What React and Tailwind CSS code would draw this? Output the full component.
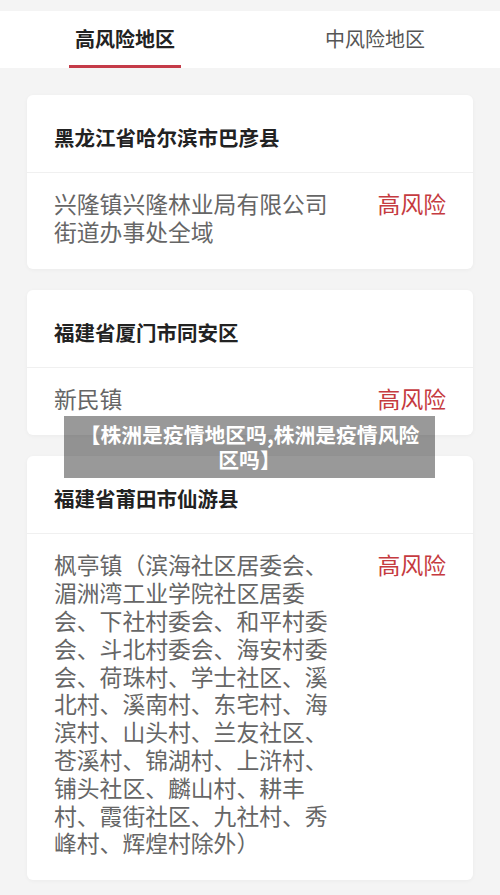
import React from "react";

const areas = [
  {
    title: "黑龙江省哈尔滨市巴彦县",
    place: "兴隆镇兴隆林业局有限公司街道办事处全域",
  },
  {
    title: "福建省厦门市同安区",
    place: "新民镇",
  },
  {
    title: "福建省莆田市仙游县",
    place:
      "枫亭镇（滨海社区居委会、湄洲湾工业学院社区居委会、下社村委会、和平村委会、斗北村委会、海安村委会、荷珠村、学士社区、溪北村、溪南村、东宅村、海滨村、山头村、兰友社区、苍溪村、锦湖村、上浒村、铺头社区、麟山村、耕丰村、霞街社区、九社村、秀峰村、辉煌村除外）",
  },
];

const AreaCard = ({ title, place }) => (
  <div className="bg-white rounded-[6px] shadow-[0_1px_4px_rgba(0,0,0,0.04)]">
    <div className="px-[27px] pt-[31px] pb-[24px] border-b border-[#f0f0f0]">
      <h3 className="text-[20.5px] leading-[22px] font-semibold text-[#222]">{title}</h3>
    </div>
    <div className="flex justify-between items-start px-[27px] pt-[17px] pb-[23px]">
      <p className="w-[285px] text-[22.8px] leading-[27.8px] text-[#666]">{place}</p>
      <span className="text-[22.8px] leading-[27.8px] text-[#c53b40]">高风险</span>
    </div>
  </div>
);

export default function App() {
  return (
    <div
      className="relative min-h-[895px] bg-[#f4f4f4] pt-[11px]"
      style={{ fontFamily: '"Noto Sans CJK SC", "Noto Sans", sans-serif' }}
    >
      <div className="flex h-[57px] bg-white">
        <div className="flex-1 flex flex-col items-center">
          <span className="mt-[17px] text-[20px] leading-[22px] font-semibold text-[#222]">
            高风险地区
          </span>
          <span className="mt-auto w-[112px] h-[3px] bg-[#c53b48]" />
        </div>
        <div className="flex-1 flex flex-col items-center">
          <span className="mt-[17px] text-[20px] leading-[22px] text-[#555]">中风险地区</span>
        </div>
      </div>

      <div className="flex flex-col gap-[21px] px-[27px] pt-[27px] pb-[18px]">
        {areas.map((a) => (
          <AreaCard key={a.title} {...a} />
        ))}
      </div>

      <div className="absolute left-[64px] top-[416px] w-[371px] h-[62px] bg-black/40 px-[14px] flex items-center justify-center">
        <p className="text-center text-white font-bold text-[20.8px] leading-[25px]">
          【株洲是疫情地区吗,株洲是疫情风险区吗】
        </p>
      </div>
    </div>
  );
}
